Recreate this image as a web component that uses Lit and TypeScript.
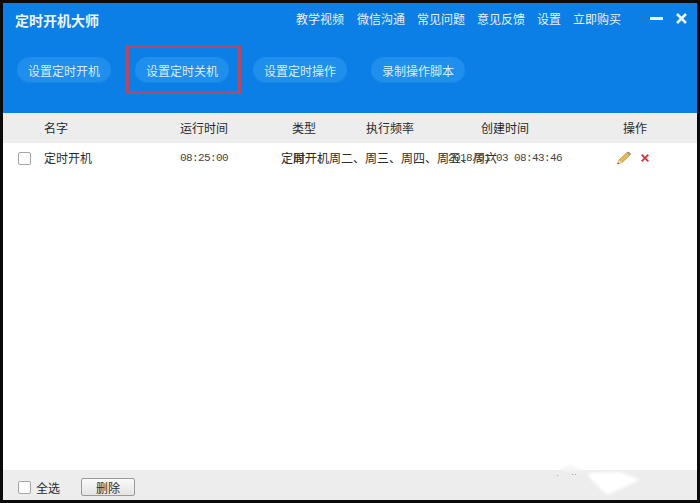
import { LitElement, html, css } from "lit";
import { customElement } from "lit/decorators.js";

@customElement("app-root")
export class AppRoot extends LitElement {
  static styles = css`
    :host {
      display: block;
      width: 700px;
      height: 503px;
      background: #0a0a0a;
      box-sizing: border-box;
      padding: 3px;
      font-family: "Noto Sans CJK SC", "Liberation Sans", sans-serif;
      font-size: 12px;
      color: #2a2a2a;
    }
    .win {
      height: 497px;
      display: flex;
      flex-direction: column;
      background: #fff;
    }
    .head {
      height: 110px;
      flex: none;
      background: #0c7fe6;
      color: #fff;
      display: flex;
      flex-direction: column;
    }
    .top {
      display: flex;
      align-items: center;
      height: 34px;
      padding-left: 12px;
    }
    .title {
      font-size: 14px;
      font-weight: 700;
      color: #eef6fd;
      line-height: 36px;
    }
    .nav {
      margin-left: 197px;
      margin-top: -2px;
      display: flex;
      gap: 12px;
      color: #e6f2fc;
      line-height: 30px;
    }
    .nav span:first-child { margin-right: 1px; }
    .win-btns {
      margin-left: 29px;
      margin-top: -4px;
      display: flex;
      align-items: center;
      gap: 13px;
    }
    .win-btns svg { display: block; }
    .btns {
      display: flex;
      gap: 24px;
      padding: 20px 0 0 14px;
    }
    .btn {
      position: relative;
      width: 94px;
      height: 26px;
      border-radius: 13px;
      background: #1f8eec;
      color: #d8eefd;
      display: flex;
      align-items: center;
      justify-content: center;
      box-shadow: inset 0 -1px 0 #1a86e4;
    }
    .mark::after {
      content: "";
      position: absolute;
      left: -9px;
      right: -12px;
      top: -12px;
      bottom: -11px;
      border: 3px solid #b04a66;
      border-radius: 1px;
    }
    .cols {
      display: grid;
      grid-template-columns: 41px 136px 112px 74px 115px 142px 1fr;
      align-items: center;
    }
    .thead {
      height: 30px;
      flex: none;
      background: #ededed;
    }
    .cell {
      white-space: nowrap;
      min-width: 0;
      margin-top: -2px;
    }
    .row {
      height: 30px;
      flex: none;
    }
    .ck {
      width: 13px;
      height: 13px;
      box-sizing: border-box;
      border: 1px solid #a5a5a5;
      border-radius: 2px;
      background: #fdfdfd;
      margin-left: 15px;
    }
    .cell.mono {
      font-family: "Liberation Mono", monospace;
      font-size: 11px;
      letter-spacing: -0.6px;
      color: #444;
      margin-top: 0;
    }
    .ctr { margin-left: -11px; }
    .freq { margin-left: -73px; }
    .cell.date { margin-left: -33px; }
    .ops {
      display: flex;
      align-items: center;
      gap: 9px;
      margin-left: -7px;
    }
    .ops svg { display: block; }
    .spacer { flex: 1; }
    .foot {
      position: relative;
      height: 30px;
      box-sizing: border-box;
      padding-top: 4px;
      flex: none;
      background: #ededed;
      display: flex;
      align-items: center;
    }
    .all { margin-left: 5px; }
    .del {
      margin-left: 21px;
      width: 54px;
      height: 18px;
      box-sizing: border-box;
      border: 1px solid #9a9a9a;
      border-radius: 2px;
      background: linear-gradient(#fafafa, #e4e4e4);
      display: flex;
      align-items: center;
      justify-content: center;
    }
    .glare {
      position: absolute;
      left: 547px;
      top: -10px;
      display: block;
    }
    .glare .blob { filter: blur(1.5px); }
  `;

  render() {
    return html`
      <div class="win">
        <div class="head">
          <div class="top">
            <div class="title">定时开机大师</div>
            <div class="nav">
              <span>教学视频</span><span>微信沟通</span><span>常见问题</span
              ><span>意见反馈</span><span>设置</span><span>立即购买</span>
            </div>
            <div class="win-btns">
              <svg width="13" height="13" viewBox="0 0 13 13"><rect x="0" y="5" width="13" height="3" fill="#eaf4fd" /></svg>
              <svg width="11" height="11" viewBox="0 0 11 11"><path d="M1 1 L10 10 M10 1 L1 10" stroke="#eaf4fd" stroke-width="2.6" /></svg>
            </div>
          </div>
          <div class="btns">
            <div class="btn">设置定时开机</div>
            <div class="btn mark">设置定时关机</div>
            <div class="btn">设置定时操作</div>
            <div class="btn">录制操作脚本</div>
          </div>
        </div>
        <div class="thead cols">
          <span></span>
          <span class="cell">名字</span>
          <span class="cell">运行时间</span>
          <span class="cell">类型</span>
          <span class="cell">执行频率</span>
          <span class="cell">创建时间</span>
          <span class="cell">操作</span>
        </div>
        <div class="row cols">
          <div class="ck"></div>
          <span class="cell">定时开机</span>
          <span class="cell mono">08:25:00</span>
          <span class="cell ctr">定时开机</span>
          <span class="cell freq">周一、周二、周三、周四、周五、周六</span>
          <span class="cell mono date">2018/01/03 08:43:46</span>
          <span class="ops">
            <svg width="16" height="14" viewBox="0 0 16 14">
              <path d="M1.5 13 L3 9 L11 1.5 L14 4 L6 11.5 Z" fill="#e6bb52" stroke="#a8843a" stroke-width=".7" />
              <path d="M1.5 13 L3 9 L6 11.5 Z" fill="#f3dcae" />
              <path d="M1.5 13 L2 11.5 L3.2 12.5 Z" fill="#333" />
              <path d="M11 1.5 L12.4 .4 L15.2 2.9 L14 4 Z" fill="#8d8d96" />
            </svg>
            <svg width="8" height="8" viewBox="0 0 8 8"><path d="M.7 .7 L7.3 7.3 M7.3 .7 L.7 7.3" stroke="#d0353a" stroke-width="1.8" /></svg>
          </span>
        </div>
        <div class="spacer"></div>
        <div class="foot">
          <div class="ck"></div>
          <span class="all">全选</span>
          <div class="del">删除</div>
          <svg class="glare" width="110" height="40" viewBox="0 0 110 40">
            <path class="blob" d="M7 10 L20 5 L37 13 Z" fill="#f4f4f4" />
            <path class="blob" d="M37 13 L70 12 L90 20 L57 35 L40 18 Z" fill="#fff" />
            <path d="M7 15 h1 v1 h-1 Z M22 14 h1 v1 h-1 Z M25 14 h1 v1 h-1 Z" fill="#aaa" />
          </svg>
        </div>
      </div>
    `;
  }
}
